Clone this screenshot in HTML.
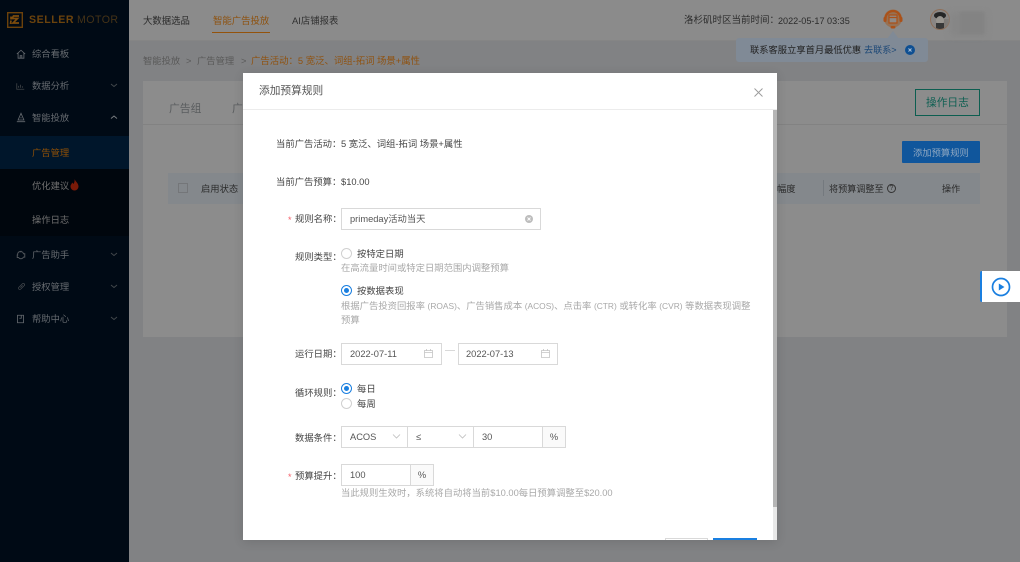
<!DOCTYPE html>
<html><head><meta charset="utf-8">
<style>
*{box-sizing:border-box;margin:0;padding:0}
html,body{width:1020px;height:562px;overflow:hidden;background:#818284}
body{position:relative;font-family:"Liberation Sans","Noto Sans CJK SC",sans-serif;font-size:9.2px;color:#333}
.a{position:absolute;white-space:nowrap;line-height:12px}
.b{position:absolute}
.side{color:#666b70;font-size:9.3px}
.lab{color:#444;font-size:9.33px}
.gray{color:#a8a8a8;font-size:9.33px}
.l{font-size:8.4px}
.in{position:absolute;background:#fff;border:1px solid #d9d9d9;height:22px;line-height:20px;font-size:9.3px;color:#555;padding-left:8px;white-space:nowrap}
.r{position:absolute;width:11px;height:11px;border-radius:50%;border:1px solid #d0d0d0;background:#fff}
.r.on{border:1px solid #1a7fe0}
.r.on:after{content:"";position:absolute;left:2px;top:2px;width:5px;height:5px;border-radius:50%;background:#1a7fe0}
svg{position:absolute;overflow:visible}
</style></head><body>

<!-- top bar -->
<div class="b" style="left:129px;top:0;width:891px;height:41px;background:#8b8b8b;border-bottom:1px solid #858585"></div>
<!-- main card -->
<div class="b" style="left:143px;top:81px;width:864px;height:256px;background:#8c8c8c"></div>
<div class="b" style="left:143px;top:124px;width:864px;height:1px;background:#828282"></div>
<div class="b" style="left:168px;top:173px;width:812px;height:31px;background:#84888c"></div>
<div class="b" style="left:178px;top:183px;width:10px;height:10px;border:1px solid #747679"></div>

<!-- sidebar -->
<div class="b" style="left:0;top:0;width:129px;height:562px;background:#000a15"></div>
<div class="b" style="left:0;top:136px;width:129px;height:33px;background:#00162b"></div>
<div class="b" style="left:0;top:169px;width:129px;height:67px;background:#00060d"></div>

<!-- logo -->
<svg style="left:7px;top:12px" width="16" height="16" viewBox="0 0 16 16"><rect x=".7" y=".7" width="14.6" height="14.6" fill="none" stroke="#6b410b" stroke-width="1.4"/><path d="M12 4H6.500L5 6.500h5.500L6 11h6M4 4.500v3M4 8.500 3.500 12" fill="none" stroke="#7d4c0c" stroke-width="1.700"/></svg>
<div class="a" style="left:29px;top:14px;font-size:10.600px;font-weight:bold;letter-spacing:.55px;color:#6b430d">SELLER</div>
<div class="a" style="left:77px;top:14px;font-size:10.600px;letter-spacing:.45px;color:#453317">MOTOR</div>

<div class="a side" style="left:32px;top:48px">综合看板</div>
<div class="a side" style="left:32px;top:80px">数据分析</div>
<div class="a side" style="left:32px;top:112px">智能投放</div>
<div class="a" style="left:32px;top:147px;color:#8f5007;font-size:9.300px">广告管理</div>
<div class="a side" style="left:32px;top:180px;color:#707070">优化建议</div>
<div class="a side" style="left:32px;top:214px;color:#707070">操作日志</div>
<div class="a side" style="left:32px;top:249px">广告助手</div>
<div class="a side" style="left:32px;top:281px">授权管理</div>
<div class="a side" style="left:32px;top:313px">帮助中心</div>
<!-- flame -->
<svg style="left:70px;top:179px" width="9" height="12" viewBox="0 0 9 12"><path d="M4.500 0C5 2 8.500 4 8.500 7.500A4 4 0 0 1 .5 7.500C.5 5.500 2 5 2 3.500 3 4 3.500 5 3.500 5 4.500 3.500 4.800 1.500 4.500 0Z" fill="#7a1a08"/></svg>
<!-- side icons -->
<svg style="left:16px;top:49px" width="10" height="10" viewBox="0 0 12 12" fill="none" stroke="#666b70" stroke-width="1"><path d="M1 6 6 1.500 11 6M2.500 5v6h7V5M5 11V8h2v3"/></svg>
<svg style="left:16px;top:81px" width="9" height="9" viewBox="0 0 12 12" fill="none" stroke="#3f4448" stroke-width="1.100"><path d="M1 3v8h10M3.500 9V6.500M6 9V5M8.500 9V7"/></svg>
<svg style="left:16px;top:112px" width="10" height="11" viewBox="0 0 12 12" fill="none" stroke="#666b70" stroke-width="1"><path d="M6 1 2.500 9h7L6 1ZM1 11h10M6 5.500v1.500"/></svg>
<svg style="left:16px;top:250px" width="10" height="10" viewBox="0 0 12 12" fill="none" stroke="#50555a" stroke-width="1.200"><path d="M2 6a3.500 3.500 0 0 1 7-1.500h1.500v4H9a3.500 3.500 0 0 1-6 .5H1.500V6H2ZM5 2.500 7 1.500"/></svg>
<svg style="left:17px;top:282px" width="9" height="9" viewBox="0 0 12 12" fill="none" stroke="#44494d" stroke-width="1"><path d="M2.500 9.500C1.500 8.500 2 7.500 3 6.500L7 2.500C8 1.500 9.500 2 10 2.800 10.500 3.800 10 4.800 9 5.500L5.500 9C4.500 10 3.500 10.500 2.500 9.500ZM4.500 7.500 7.500 4.500"/></svg>
<svg style="left:16px;top:314px" width="9" height="10" viewBox="0 0 12 12" fill="none" stroke="#666b70" stroke-width="1.100"><path d="M2 1h8v10H2V1ZM7 1v4H4.500"/></svg>
<!-- chevrons -->
<svg style="left:110px;top:81px" width="8" height="8" fill="none" stroke="#44494d" stroke-width=".9"><path d="M1 3 4 5.500 7 3"/></svg>
<svg style="left:110px;top:113px" width="8" height="8" fill="none" stroke="#7a7f83" stroke-width=".9"><path d="M1 5.500 4 3 7 5.500"/></svg>
<svg style="left:110px;top:250px" width="8" height="8" fill="none" stroke="#44494d" stroke-width=".9"><path d="M1 3 4 5.500 7 3"/></svg>
<svg style="left:110px;top:282px" width="8" height="8" fill="none" stroke="#44494d" stroke-width=".9"><path d="M1 3 4 5.500 7 3"/></svg>
<svg style="left:110px;top:314px" width="8" height="8" fill="none" stroke="#44494d" stroke-width=".9"><path d="M1 3 4 5.500 7 3"/></svg>

<!-- top nav -->
<div class="a" style="left:143px;top:15px;font-size:9.400px;color:#2a2a2a">大数据选品</div>
<div class="a" style="left:213px;top:15px;font-size:9.400px;color:#8e520f">智能广告投放</div>
<div class="b" style="left:212px;top:32px;width:58px;height:1px;background:#94530b"></div>
<div class="a" style="left:292px;top:15px;font-size:9.400px;color:#303030">AI店铺报表</div>

<div class="a" style="left:684px;top:15px;font-size:9.500px;color:#2c2c2c">洛杉矶时区当前时间：</div>
<div class="a" style="left:778px;top:15px;font-size:9.100px;color:#2c2c2c">2022-05-17 03:35</div>
<!-- headset -->
<svg style="left:883px;top:9px" width="20" height="21" viewBox="0 0 20 21"><circle cx="10" cy="9.500" r="9" fill="#a25c27" opacity=".55"/><path d="M2.500 11V9.500a7.500 7.500 0 0 1 15 0V11" fill="none" stroke="#aa5119" stroke-width="2.200"/><rect x=".5" y="8" width="3" height="5" rx="1.200" fill="#aa5119"/><rect x="16.500" y="8" width="3" height="5" rx="1.200" fill="#aa5119"/><rect x="6" y="6" width="8" height="8" fill="#8f8a86"/><path d="M6 6h8v8H6zM6 8.500h8" fill="none" stroke="#aa5119" stroke-width="1.200"/><rect x="7.500" y="17" width="5" height="2.500" rx="1.200" fill="#aa5119"/></svg>
<!-- avatar -->
<div class="b" style="left:930px;top:9px;width:20px;height:21px;border-radius:50%;background:#8a8684;border:1px solid #8f6f58;overflow:hidden"><div class="b" style="left:3px;top:2px;width:12px;height:7px;background:#262626;border-radius:50%"></div><div class="b" style="left:5px;top:6px;width:8px;height:9px;background:#99958f;border-radius:50%"></div><div class="b" style="left:5px;top:13px;width:8px;height:7px;background:#383838"></div><div class="b" style="left:13px;top:9px;width:6px;height:12px;background:#7e7a76"></div></div>
<div class="b" style="left:950px;top:13px;width:36px;height:23px;background:#868686;filter:blur(3px);border-radius:3px"></div>
<div class="b" style="left:960px;top:12px;width:24px;height:22px;background:#838383;filter:blur(1px)"></div>
<!-- tooltip -->
<div class="b" style="left:736px;top:38px;width:192px;height:24px;background:#808a96;border-radius:3px"></div>
<svg style="left:887px;top:31px" width="12" height="8"><path d="M0 8 6 0 12 8Z" fill="#808a96"/></svg>
<div class="a" style="left:750px;top:44px;font-size:9.280px;color:#222">联系客服立享首月最低优惠</div>
<div class="a" style="left:864px;top:44px;font-size:9.100px;color:#1b4776">去联系&gt;</div>
<div class="b" style="left:905px;top:45px;width:10px;height:10px;border-radius:50%;background:#0e4f92"></div>
<svg style="left:905px;top:45px" width="10" height="10" stroke="#a9bfd6" stroke-width="1"><path d="M3.500 3.500 6.500 6.500M6.500 3.500 3.500 6.500"/></svg>

<!-- breadcrumb -->
<div class="a" style="left:143px;top:55px;font-size:9.300px;color:#595959">智能投放</div>
<div class="a" style="left:186px;top:55px;font-size:9.300px;color:#595959">&gt;</div>
<div class="a" style="left:197px;top:55px;font-size:9.300px;color:#595959">广告管理</div>
<div class="a" style="left:241px;top:55px;font-size:9.300px;color:#595959">&gt;</div>
<div class="a" style="left:251px;top:55px;font-size:9.400px;color:#8f5210">广告活动：5 宽泛、词组-拓词 场景+属性</div>

<!-- page content -->
<div class="a" style="left:169px;top:103px;font-size:10.800px;color:#5a5d5f">广告组</div>
<div class="a" style="left:232px;top:103px;font-size:10.800px;color:#5a5d5f">广</div>
<div class="b" style="left:915px;top:89px;width:65px;height:27px;border:1px solid #0c5e50"></div>
<div class="a" style="left:926px;top:97px;font-size:10.700px;color:#0e5f52">操作日志</div>
<div class="b" style="left:902px;top:141px;width:78px;height:22px;background:#10569c;border-radius:1px"></div>
<div class="a" style="left:913px;top:147px;font-size:9.300px;color:#8fa8c2">添加预算规则</div>
<div class="a" style="left:201px;top:183px;font-size:9.300px;color:#2b2b2b">启用状态</div>
<div class="a" style="left:777px;top:183px;font-size:9.300px;color:#2b2b2b">幅度</div>
<div class="b" style="left:823px;top:180px;width:1px;height:16px;background:#74797e"></div>
<div class="a" style="left:829px;top:183px;font-size:9.100px;color:#2b2b2b">将预算调整至</div>
<div class="b" style="left:887px;top:184px;width:9px;height:9px;border-radius:50%;border:1px solid #333;font-size:7px;line-height:7px;text-align:center;color:#333">?</div>
<div class="a" style="left:942px;top:183px;font-size:9.100px;color:#2b2b2b">操作</div>

<!-- floating play -->
<div class="b" style="left:980px;top:271px;width:40px;height:31px;background:#fff;border-left:2.500px solid #1a7fe0;border-radius:2px 0 0 2px"></div>
<svg style="left:991px;top:277px" width="20" height="20"><circle cx="10" cy="10" r="8.500" fill="none" stroke="#1a7fe0" stroke-width="1.700"/><path d="M7.800 6.500 13.500 10 7.800 13.500Z" fill="#1a7fe0"/></svg>

<!-- modal -->
<div class="b" style="left:243px;top:73px;width:534px;height:467px;background:#fff;box-shadow:0 2px 10px rgba(0,0,0,.12);overflow:hidden">
  <div class="b" style="left:0;top:36px;width:534px;height:1px;background:#ececec"></div>
  <div class="b" style="left:530px;top:37px;width:4px;height:430px;background:#e8e8e8"></div>
  <div class="b" style="left:530px;top:37px;width:4px;height:397px;background:#b5b5b5"></div>
  <div class="b" style="left:422px;top:465px;width:43px;height:10px;border:1px solid #d9d9d9;background:#fff"></div>
  <div class="b" style="left:470px;top:465px;width:44px;height:10px;background:#1a7fe0"></div>
</div>
<div class="a" style="left:259px;top:85px;font-size:10.700px;color:#555">添加预算规则</div>
<svg style="left:754px;top:88px" width="9" height="9" stroke="#9a9a9a" stroke-width=".9"><path d="M.5.500 8.500 8.500M8.500.500.500 8.500"/></svg>

<div class="a lab" style="left:276px;top:138px">当前广告活动：</div>
<div class="a lab" style="left:341px;top:138px">5 宽泛、词组-拓词 场景+属性</div>
<div class="a lab" style="left:276px;top:176px">当前广告预算：</div>
<div class="a lab" style="left:341px;top:176px">$10.00</div>

<div class="a" style="left:288px;top:214px;color:#f5606a;font-size:9.100px">*</div>
<div class="a lab" style="left:295px;top:213px">规则名称：</div>
<div class="in" style="left:341px;top:208px;width:200px">primeday活动当天</div>
<div class="b" style="left:525px;top:215px;width:8px;height:8px;border-radius:50%;background:#bdbdbd"></div>
<svg style="left:525px;top:215px" width="8" height="8" stroke="#fff" stroke-width=".9"><path d="M2.500 2.500 5.500 5.500M5.500 2.500 2.500 5.500"/></svg>

<div class="a lab" style="left:295px;top:251px">规则类型：</div>
<div class="r" style="left:341px;top:248px"></div>
<div class="a lab" style="left:357px;top:248px">按特定日期</div>
<div class="a gray" style="left:341px;top:262px">在高流量时间或特定日期范围内调整预算</div>
<div class="r on" style="left:341px;top:285px"></div>
<div class="a lab" style="left:357px;top:285px">按数据表现</div>
<div class="a gray" style="left:341px;top:300px">根据广告投资回报率 <span class="l">(ROAS)</span>、广告销售成本 <span class="l">(ACOS)</span>、点击率 <span class="l">(CTR)</span> 或转化率 <span class="l">(CVR)</span> 等数据表现调整</div>
<div class="a gray" style="left:341px;top:314px">预算</div>

<div class="a lab" style="left:295px;top:348px">运行日期：</div>
<div class="in" style="left:341px;top:343px;width:101px">2022-07-11</div>
<div class="b" style="left:445px;top:350px;width:10px;height:1px;background:#d9d9d9"></div>
<div class="in" style="left:458px;top:343px;width:100px;padding-left:7px">2022-07-13</div>
<svg style="left:424px;top:349px" width="9" height="9" fill="none" stroke="#c4c4c4" stroke-width=".8"><path d="M.5 1.500h8v7h-8zM.5 3.500h8M2.500 0v2M6.500 0v2"/></svg>
<svg style="left:541px;top:349px" width="9" height="9" fill="none" stroke="#c4c4c4" stroke-width=".8"><path d="M.5 1.500h8v7h-8zM.5 3.500h8M2.500 0v2M6.500 0v2"/></svg>

<div class="a lab" style="left:295px;top:387px">循环规则：</div>
<div class="r on" style="left:341px;top:383px"></div>
<div class="a lab" style="left:357px;top:383px">每日</div>
<div class="r" style="left:341px;top:398px"></div>
<div class="a lab" style="left:357px;top:398px">每周</div>

<div class="a lab" style="left:295px;top:432px">数据条件：</div>
<div class="in" style="left:341px;top:426px;width:67px">ACOS</div>
<div class="in" style="left:407px;top:426px;width:67px">≤</div>
<div class="in" style="left:473px;top:426px;width:70px">30</div>
<div class="in" style="left:542px;top:426px;width:24px;background:#fafafa;padding:0;text-align:center">%</div>
<svg style="left:392px;top:433px" width="9" height="7" fill="none" stroke="#bdbdbd" stroke-width=".8"><path d="M1 1.500 4.500 5 8 1.500"/></svg>
<svg style="left:458px;top:433px" width="9" height="7" fill="none" stroke="#bdbdbd" stroke-width=".8"><path d="M1 1.500 4.500 5 8 1.500"/></svg>

<div class="a" style="left:288px;top:471px;color:#f5606a;font-size:9.100px">*</div>
<div class="a lab" style="left:295px;top:470px">预算提升：</div>
<div class="in" style="left:341px;top:464px;width:70px">100</div>
<div class="in" style="left:410px;top:464px;width:24px;background:#fafafa;padding:0;text-align:center">%</div>
<div class="a gray" style="left:341px;top:487px">当此规则生效时，系统将自动将当前$10.00每日预算调整至$20.00</div>

</body></html>
